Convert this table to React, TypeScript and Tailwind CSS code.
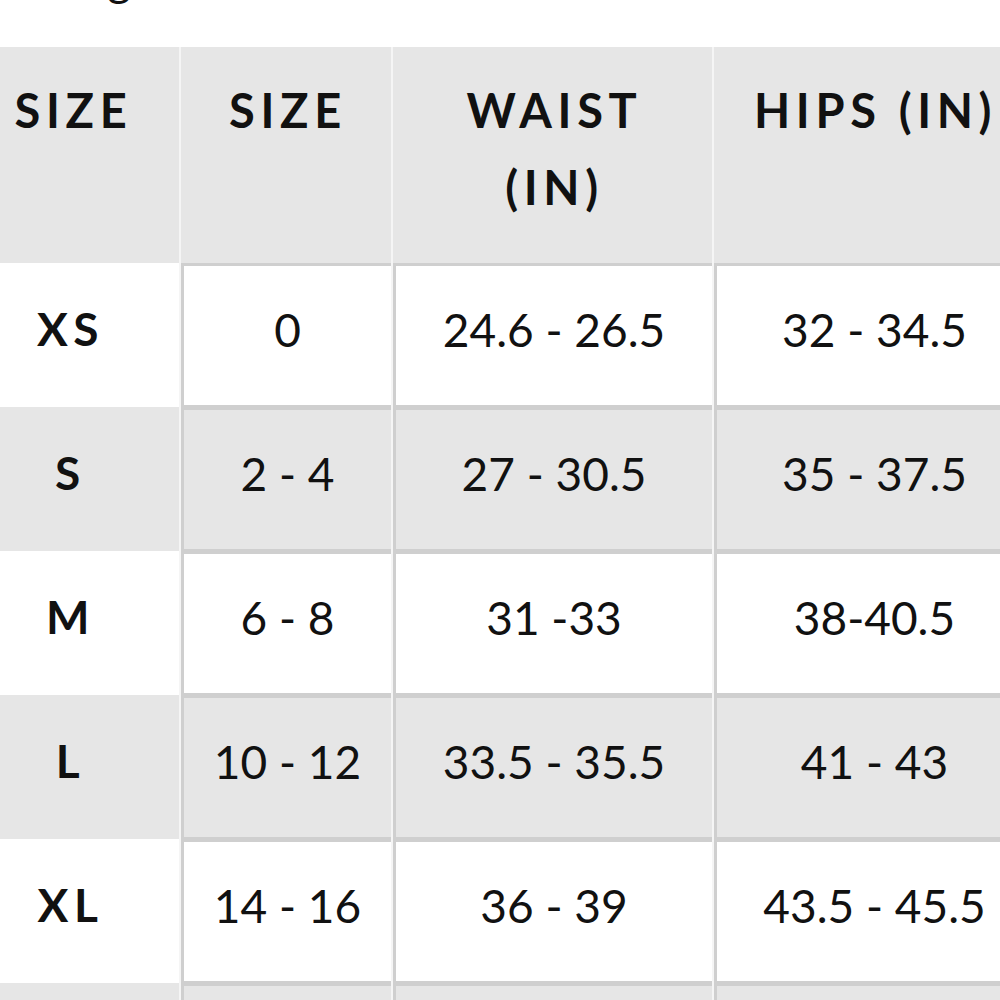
import React from "react";

const rows = [
  { label: "XS", size: "0", waist: "24.6 - 26.5", hips: "32 - 34.5" },
  { label: "S", size: "2 - 4", waist: "27 - 30.5", hips: "35 - 37.5" },
  { label: "M", size: "6 - 8", waist: "31 -33", hips: "38-40.5" },
  { label: "L", size: "10 - 12", waist: "33.5 - 35.5", hips: "41 - 43" },
  { label: "XL", size: "14 - 16", waist: "36 - 39", hips: "43.5 - 45.5" },
  { label: "", size: "", waist: "", hips: "" },
];

const font = { fontFamily: "Lato, 'Open Sans', sans-serif" };

function DataCell({ text, bg, w }: { text: string; bg: string; w: string }) {
  return (
    <div
      className={`${w} ${bg} shrink-0 flex items-center justify-center border-t-[3px] border-l-[3px] border-b-[2px] border-[#cfcfcf] pb-[12px] text-[46px] text-[#111111]`}
    >
      {text}
    </div>
  );
}

export default function App() {
  return (
    <div className="w-[1000px] h-[1000px] overflow-hidden bg-white relative" style={font}>
      <div className="h-[47px] overflow-hidden">
        <div className="pl-[14px] -mt-[44px] text-[46px] leading-[46px] text-[#111111]">Sizing</div>
      </div>
      <div className="flex flex-col -ml-[38px] w-[1080px] bg-[#f5f5f5]">
        <div className="flex gap-x-[2px] h-[216px] text-[47px] font-bold tracking-[0.12em] leading-[77px] text-[#111111]">
          <div className="w-[217px] shrink-0 bg-[#e6e6e6] pt-[25px] text-center pl-[6px]">SIZE</div>
          <div className="w-[210px] shrink-0 bg-[#e6e6e6] pt-[25px] text-center pl-[4px]">SIZE</div>
          <div className="w-[319px] shrink-0 bg-[#e6e6e6] pt-[25px] text-center pl-[4px]">
            WAIST
            <br />
            (IN)
          </div>
          <div className="w-[330px] shrink-0 bg-[#e6e6e6] pt-[25px] pl-[40px] whitespace-nowrap">HIPS (IN)</div>
        </div>
        {rows.map((r, i) => {
          const bg = i % 2 === 0 ? "bg-white" : "bg-[#e6e6e6]";
          return (
            <div key={i} className="flex gap-x-[2px] h-[144px]">
              <div
                className={`w-[217px] shrink-0 ${bg} flex items-center justify-center pb-[14px] text-[46px] font-bold tracking-[0.12em] text-[#111111]`}
              >
                {r.label}
              </div>
              <DataCell text={r.size} bg={bg} w="w-[210px]" />
              <DataCell text={r.waist} bg={bg} w="w-[319px]" />
              <DataCell text={r.hips} bg={bg} w="w-[318px]" />
            </div>
          );
        })}
      </div>
    </div>
  );
}
